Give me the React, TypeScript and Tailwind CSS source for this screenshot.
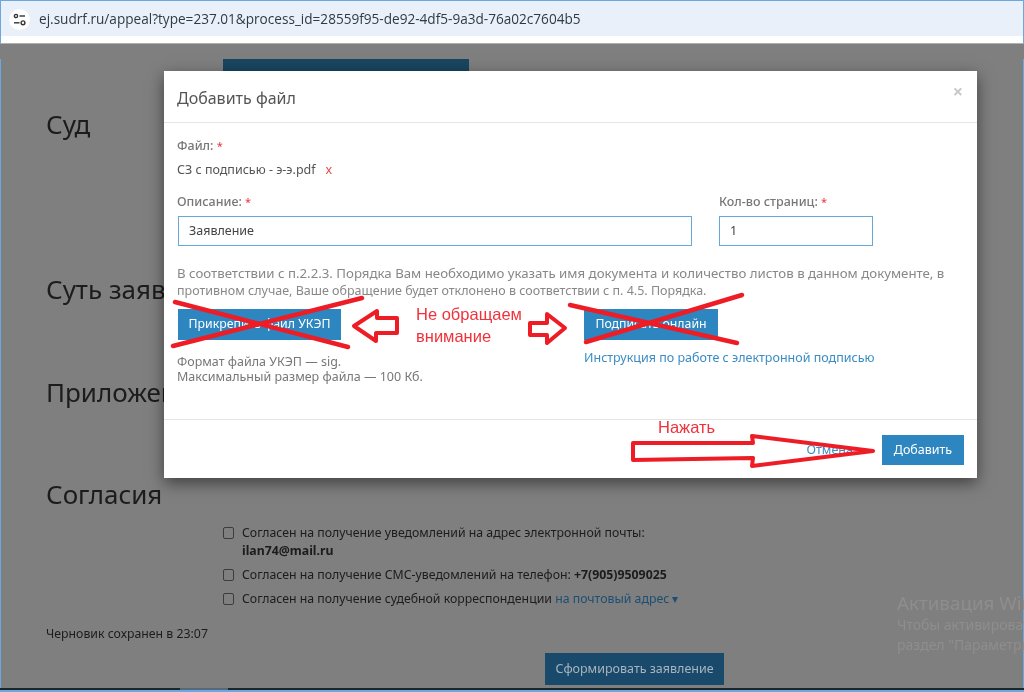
const modalFont = { fontFamily: '"Noto Sans", sans-serif' };

function ConsentRow({ children }: { children: React.ReactNode }) {
  return (
    <div className="flex items-start gap-[8px]">
      <span className="mt-[3px] h-[12px] w-[11px] shrink-0 rounded-[2px] border border-[#3c3c3c]" />
      <div>{children}</div>
    </div>
  );
}

function Annotations() {
  return (
    <svg className="pointer-events-none absolute left-0 top-0" width="1024" height="692" fill="none" stroke="#ee1c25" strokeLinecap="round" strokeLinejoin="round">
      <g strokeWidth="4.5">
        <path d="M175 302 L348 347" />
        <path d="M173 346 L362 298" />
        <path d="M570 305 L737 343" />
        <path d="M586 342 L742 295" />
      </g>
      <g strokeWidth="4">
        <path d="M354 326 L377 311 L377 318 L397 318 L397 333 L376 333 L376 341 Z" />
        <path d="M530 323 L547 323 L547 314 L565 328 L547 343 L547 335 L530 335 Z" />
        <path d="M633 443 L753 443 L752 436 L873 451 L752 466 L753 458 L633 460 Z" />
      </g>
    </svg>
  );
}

export default function App() {
  return (
    <div className="relative h-[692px] w-[1024px] overflow-hidden bg-[#7f7f7f] blur-[0.45px]" style={modalFont}>
      {/* browser bar */}
      <div className="h-[44px] border border-[#6aa8e0] border-b-[#b0b0b0] bg-white">
        <div className="flex h-[35px] w-full items-center gap-[9px] bg-[#e9f0fa] pl-[8px] pt-[2px]">
          <span className="flex h-[21px] w-[21px] items-center justify-center rounded-full bg-white">
            <svg width="13" height="13" viewBox="0 0 13 13" fill="none" stroke="#333" strokeWidth="1.4">
              <circle cx="3" cy="3" r="1.6" />
              <path d="M6.5 3 H12" />
              <path d="M1 9.8 H6.5" />
              <circle cx="10" cy="9.8" r="1.9" />
            </svg>
          </span>
          <span className="text-[13.6px] text-[#2f3a45]" style={{ fontFamily: '"Open Sans", sans-serif' }}>
            ej.sudrf.ru/appeal?type=237.01&amp;process_id=28559f95-de92-4df5-9a3d-76a02c7604b5
          </span>
        </div>
      </div>

      {/* dimmed page behind the dialog */}
      <div className="relative h-[648px] border-x border-[#6aa8e0] pl-[45px] text-[#1c1c1c]">
        <div className="ml-[177px] mt-[15px] h-[30px] w-[246px] bg-[#1a4560]" />
        <h2 className="mt-[19px] text-[26px] leading-[32px]">Суд</h2>
        <h2 className="mt-[133px] text-[26px] leading-[32px]">Суть заявления</h2>
        <h2 className="mt-[71px] text-[26px] leading-[32px]">Приложения</h2>
        <h2 className="mt-[70px] text-[26px] leading-[32px]">Согласия</h2>
        <div className="ml-[177px] mt-[14px] flex flex-col gap-[6px] text-[12.3px] leading-[18px]">
          <ConsentRow>
            Согласен на получение уведомлений на адрес электронной почты:
            <div className="font-bold">ilan74@mail.ru</div>
          </ConsentRow>
          <ConsentRow>
            Согласен на получение СМС-уведомлений на телефон: <b>+7(905)9509025</b>
          </ConsentRow>
          <ConsentRow>
            Согласен на получение судебной корреспонденции <span className="text-[#1d4e73]">на почтовый адрес ▾</span>
          </ConsentRow>
        </div>
        <div className="mt-[17px] text-[12.3px] leading-[18px]">Черновик сохранен в 23:07</div>
        <div className="ml-[499px] mt-[10px] flex h-[32px] w-[179px] items-center justify-center bg-[#1a4a6b] text-[12.5px] text-[#a8b4bd]">
          Сформировать заявление
        </div>
      </div>

      {/* windows watermark */}
      <div className="absolute left-[897px] top-[590px] w-[320px] whitespace-nowrap text-[#8e8e8e]">
        <div className="text-[18.8px] leading-[26px]">Активация Windows</div>
        <div className="mt-[-1px] text-[14px] leading-[20px]">Чтобы активировать Windows, перейдите в</div>
        <div className="text-[14px] leading-[20px]">раздел "Параметры"</div>
      </div>

      {/* bottom edge */}
      <div className="absolute bottom-0 left-0 h-[4px] w-full border-b-2 border-[#6aa8e0] bg-[#1f2428]">
        <div className="ml-[180px] h-full w-[48px] bg-[#56687a]" />
      </div>

      {/* dialog */}
      <div className="absolute left-[164px] top-[71px] flex h-[407px] w-[813px] flex-col bg-white shadow-[0_5px_15px_rgba(0,0,0,0.5)]">
        <div className="flex h-[52px] items-center justify-between border-b border-[#e5e5e5] pl-[13px] pr-[14px]">
          <div className="mt-[3px] text-[16px] text-[#555]">Добавить файл</div>
          <div className="-mt-[10px] text-[18px] font-bold text-[#c8c8c8]">×</div>
        </div>

        <div className="flex-1 px-[13px] pt-[14px] text-[12.5px] text-[#777]">
          <div className="font-medium leading-[18px]">
            Файл: <span className="text-[11px] text-[#e8454a]">*</span>
          </div>
          <div className="mt-[6px] flex leading-[18px] text-[#555]">
            <span>СЗ с подписью - э-э.pdf</span>
            <span className="ml-[10px] text-[#e8454a]">x</span>
          </div>
          <div className="mt-[14px] flex gap-[27px]">
            <div className="ml-[1px] w-[514px]">
              <div className="-ml-[1px] font-medium leading-[18px]">
                Описание: <span className="text-[11px] text-[#e8454a]">*</span>
              </div>
              <div className="mt-[5px] flex h-[30px] items-center border border-[#66a9d9] pl-[10px] text-[#444]">Заявление</div>
            </div>
            <div className="w-[154px]">
              <div className="font-medium leading-[18px]">
                Кол-во страниц: <span className="text-[11px] text-[#e8454a]">*</span>
              </div>
              <div className="mt-[5px] flex h-[30px] items-center border border-[#66a9d9] pl-[10px] text-[#444]">1</div>
            </div>
          </div>
          <p className="mt-[18px] whitespace-nowrap leading-[18px] text-[#888]">
            <span className="block text-[13.25px]">В соответствии с п.2.2.3. Порядка Вам необходимо указать имя документа и количество листов в данном документе, в</span>
            <span className="block text-[12.5px]">противном случае, Ваше обращение будет отклонено в соответствии с п. 4.5. Порядка.</span>
          </p>
          <div className="mt-[9px] flex">
            <div className="ml-[1px] w-[406px]">
              <div className="flex h-[31px] w-[163px] items-center justify-center bg-[#2e86c1] text-[12.3px] text-white">Прикрепить файл УКЭП</div>
              <div className="-ml-[1px] mt-[14px] leading-[15px]">
                Формат файла УКЭП — sig.
                <br />
                Максимальный размер файла — 100 Кб.
              </div>
            </div>
            <div>
              <div className="flex h-[31px] w-[134px] items-center justify-center bg-[#2e86c1] text-[12.3px] text-white">Подписать онлайн</div>
              <div className="mt-[9px] whitespace-nowrap text-[#3a8cc4]">Инструкция по работе с электронной подписью</div>
            </div>
          </div>
        </div>

        <div className="flex h-[59px] items-center justify-end gap-[29px] border-t border-[#e5e5e5] pr-[13px] pt-[2px]">
          <span className="text-[12.5px] text-[#3a8cc4]">Отмена</span>
          <div className="flex h-[30px] w-[82px] items-center justify-center bg-[#2e86c1] text-[12.5px] text-white">Добавить</div>
        </div>
      </div>

      <Annotations />

      <div className="absolute left-[416px] top-[303px] text-[16.5px] leading-[22px] text-[#f0323c]" style={{ fontFamily: '"Liberation Sans", sans-serif' }}>
        Не обращаем
        <br />
        внимание
      </div>
      <div className="absolute left-[658px] top-[417px] text-[16.5px] leading-[20px] text-[#f0323c]" style={{ fontFamily: '"Liberation Sans", sans-serif' }}>
        Нажать
      </div>
    </div>
  );
}
